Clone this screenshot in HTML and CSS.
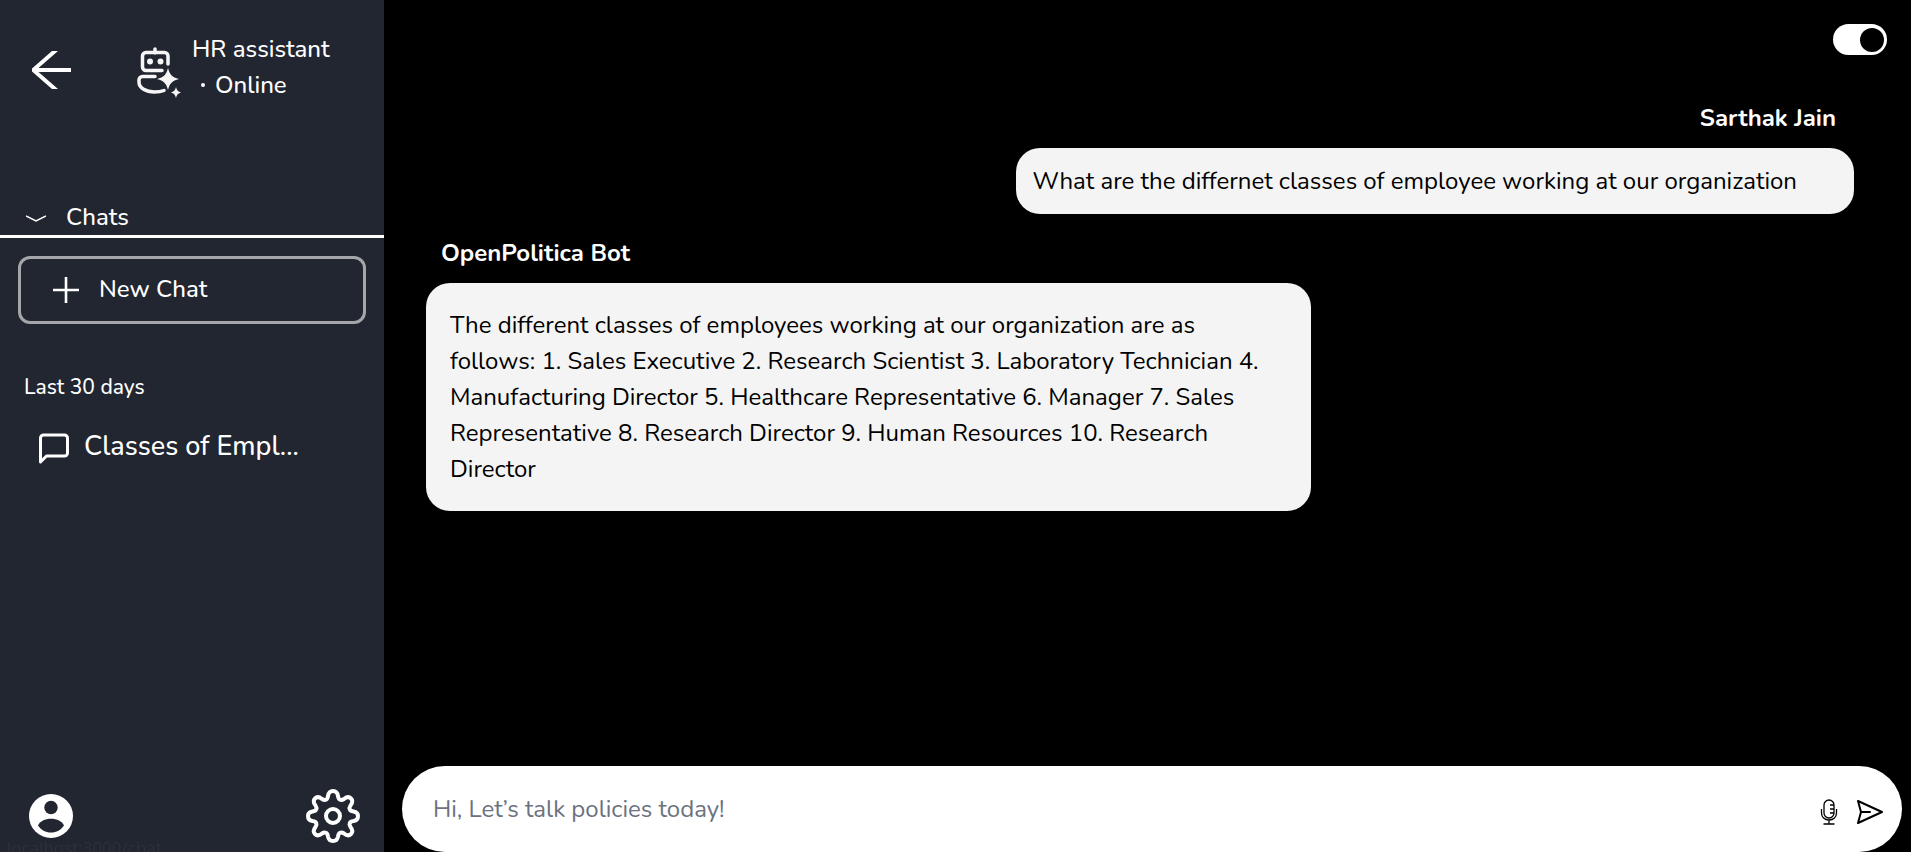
FILE: index.html
```html
<!DOCTYPE html>
<html lang="en">
<head>
<meta charset="utf-8">
<meta name="viewport" content="width=device-width, initial-scale=1">
<title>HR assistant</title>
<link rel="stylesheet" href="styles.css">
</head>
<body class="app">
  <aside class="sidebar">
    <header class="assistant">
      <button class="icon-button" type="button" aria-label="Back">
        <svg width="39" height="38" viewBox="0 0 39 38" fill="#fff"><path d="M20 0H26L6.500 17H39V21H6.500L26 38H20L0 20.500V17.500z"/></svg>
      </button>
      <svg class="robot" width="44" height="52" viewBox="0 0 44 52" fill="none" stroke="#f6f6f6" stroke-width="3.500" stroke-linecap="round">
        <path d="M18 2V6M31 17V9a3.500 3.500 0 0 0-3.500-3.500H9A3.500 3.500 0 0 0 5.500 9v11A3.500 3.500 0 0 0 9 23.500h16"/>
        <path d="M18 29.500H5.500A3.500 3.500 0 0 0 2 33v2c0 6 7 10 15.500 10 4 0 7-.500 9.500-1.500"/>
        <g fill="#f6f6f6" stroke="none"><circle cx="13" cy="14.500" r="3"/><circle cx="23.500" cy="14.500" r="3"/>
        <path d="M31 21c2 7 4 9 11 11-7 2-9 4-11 11-2-7-4-9-11-11 7-2 9-4 11-11z"/><path d="M39 40c1 3.500 2 4.500 5 5.500-3 1-4 2-5 5.500-1-3.500-2-4.500-5-5.500 3-1 4-2 5-5.500z"/></g>
      </svg>
      <div class="identity"><span>HR assistant</span><span class="status">Online</span></div>
    </header>
    <h2 class="section">
      <svg width="20" height="10" viewBox="0 0 20 10" fill="none" stroke="#fff" stroke-width="1.500"><path d="M0 4L10 9L20 4"/></svg>
      Chats
    </h2>
    <button class="new-chat" type="button">
      <svg width="26" height="28" viewBox="0 0 26 28" stroke="#fff" stroke-width="2.600"><path d="M13 2V28M0 15H26"/></svg>
      New Chat
    </button>
    <h3 class="period">Last 30 days</h3>
    <a class="chat-link" href="#">
      <svg width="36" height="36" viewBox="0 0 24 24" fill="none" stroke="#fff" stroke-width="2" stroke-linecap="round" stroke-linejoin="round"><path d="M21 16a2 2 0 0 1-2 2H7l-4 4V6a2 2 0 0 1 2-2h14a2 2 0 0 1 2 2z"/></svg>
      <span>Classes of Empl...</span>
    </a>
    <footer class="sidebar-footer">
      <button class="icon-button" type="button" aria-label="Profile">
        <svg width="44" height="44" viewBox="0 0 44 44"><circle cx="22" cy="22" r="22" fill="#fff"/><g fill="#222630"><circle cx="22" cy="13.500" r="6.700"/><path d="M9 31.500C11 27 16 24.700 22 24.700S33 27 35 31.500C32 36 27.500 38.500 22 38.500S12 36 9 31.500z"/></g></svg>
      </button>
      <button class="icon-button" type="button" aria-label="Settings">
        <svg width="54" height="54" viewBox="0 0 54 54" fill="none" stroke="#fff" stroke-width="4" stroke-linejoin="round"><circle cx="27" cy="27" r="7"/><path d="M27 2c3 0 4.500 2 5 5 .500 4 3 5 6 3 2.500-2 5-2.500 7-.500s1.500 4.500-.500 7c-2 3-1 5.500 3 6 3 .500 4.500 2 4.500 4.500s-1.500 4.500-4.500 5c-4 .500-5 3-3 6 2 2.500 2.500 5 .500 7s-4.500 1.500-7-.500c-3-2-5.500-1-6 3-.500 3-2 4.500-5 4.500s-4.500-1.500-5-4.500c-.500-4-3-5-6-3-2.500 2-5 2.500-7 .500s-1.500-4.500.500-7c2-3 1-5.500-3-6-3-.500-4.500-2-4.500-5s1.500-4 4.500-4.500c4-.500 5-3 3-6-2-2.500-2.500-5-.500-7s4.500-1.500 7 .500c3 2 5.500 1 6-3 .500-3 2-5 5-5z"/></svg>
      </button>
    </footer>
  </aside>
  <main class="chat">
    <label class="toggle"><input class="toggle-input" type="checkbox" role="switch" aria-label="Dark mode" checked></label>
    <section class="messages">
      <article class="message message-user">
        <h4 class="author">Sarthak Jain</h4>
        <p class="bubble">What are the differnet classes of employee working at our organization</p>
      </article>
      <article class="message message-bot">
        <h4 class="author">OpenPolitica Bot</h4>
        <p class="bubble">The different classes of employees working at our organization are as follows: 1. Sales Executive 2. Research Scientist 3. Laboratory Technician 4. Manufacturing Director 5. Healthcare Representative 6. Manager 7. Sales Representative 8. Research Director 9. Human Resources 10. Research Director</p>
      </article>
    </section>
    <form class="composer">
      <input class="prompt" type="text" aria-label="Message" placeholder="Hi, Let’s talk policies today!">
      <div class="composer-actions">
        <button class="icon-button" type="button" aria-label="Speak">
          <svg width="18" height="26" viewBox="0 0 18 26" fill="none" stroke="#000" stroke-width="1.300"><rect x="4" y="1" width="10" height="18" rx="5"/><path d="M14 6h-4M14 10h-4M14 14h-4M1.500 10v4c0 4 3 7 7.500 7s7.500-3 7.500-7v-4M9 21v4M3.500 25h11"/></svg>
        </button>
        <button class="icon-button" type="button" aria-label="Send">
          <svg width="28" height="26" viewBox="0 0 28 26" fill="none" stroke="#000" stroke-width="2" stroke-linejoin="round" stroke-linecap="round"><path d="M2 2L26 13L2 24L5 13zM5 13H14"/></svg>
        </button>
      </div>
    </form>
  </main>
  <div class="link-status">localhost:3000/chat</div>
</body>
</html>
```
FILE: styles.css
```css
* { box-sizing: border-box; }
.app {
  margin: 0;
  display: flex;
  min-height: 100vh;
  background: #000;
  color: #fff;
  font: 24px/36px Nunito, Lato, "Open Sans", sans-serif;
}
.app svg { display: block; flex: none; }
h2, h3, h4, p { margin: 0; font-size: inherit; font-weight: inherit; }
button, input { font: inherit; color: inherit; }
.icon-button { border: 0; padding: 0; background: none; cursor: pointer; }

.sidebar {
  flex: none;
  width: 384px;
  display: flex;
  flex-direction: column;
  background: #222630;
  font-weight: 500;
}
.assistant { display: flex; align-items: flex-end; padding: 31px 32px 0; }
.assistant .icon-button { padding-bottom: 14px; }
.robot { margin: 0 11px 4px 66px; }
.identity { display: flex; flex-direction: column; }
.status { display: flex; align-items: center; gap: 10px; padding-left: 9px; }
.status::before { content: ""; width: 4px; height: 4px; border-radius: 50%; background: #fff; }
.section {
  display: flex;
  align-items: center;
  gap: 20px;
  margin-top: 96px;
  padding-left: 26px;
  border-bottom: 3px solid #fff;
}
.new-chat {
  display: flex;
  align-items: center;
  gap: 20px;
  margin: 18px;
  padding: 12px 32px 14px;
  border: 3px solid #a5a6aa;
  border-radius: 12px;
  background: none;
}
.period { margin: 27px 24px 0; font-size: 21px; }
.chat-link {
  display: flex;
  align-items: center;
  gap: 12px;
  margin-top: 24px;
  padding-left: 36px;
  color: #fff;
  font-size: 27px;
  text-decoration: none;
}
.sidebar-footer {
  display: flex;
  align-items: center;
  justify-content: space-between;
  margin-top: auto;
  padding: 0 24px 9px 29px;
}

.chat { flex: 1; min-width: 0; display: flex; flex-direction: column; }
.toggle { align-self: flex-end; margin: 24px 24px 0; display: flex; }
.toggle-input {
  appearance: none;
  display: flex;
  align-items: center;
  justify-content: flex-end;
  width: 54px;
  height: 31px;
  margin: 0;
  padding: 0 3px;
  border-radius: 16px;
  background: #fff;
}
.toggle-input::before { content: ""; width: 24px; height: 24px; border-radius: 50%; background: #000; }
.toggle-input:not(:checked) { justify-content: flex-start; }
.messages { flex: 1; display: flex; flex-direction: column; gap: 21px; padding: 45px 57px 24px 42px; }
.message { display: flex; flex-direction: column; align-items: flex-start; gap: 12px; }
.author { padding: 0 18px 0 15px; font-weight: 700; }
.bubble { border-radius: 24px; background: #f4f4f4; color: #000; }
.message-user { align-items: flex-end; }
.message-user .bubble { padding: 15px 57px 15px 16px; }
.message-bot .bubble { width: 62%; padding: 24px 40px 24px 24px; }
.composer {
  display: flex;
  align-items: center;
  margin: 0 9px 0 18px;
  padding: 25px 18px 25px 31px;
  gap: 20px;
  border-radius: 43px;
  background: #fff;
}
.composer-actions { display: flex; gap: 18px; padding-top: 6px; }
.prompt { flex: 1; min-width: 0; height: 36px; padding: 0; border: 0; outline: 0; background: none; color: #000; }
.prompt::placeholder { color: #6b7280; opacity: 1; }

.link-status {
  position: fixed;
  left: 0;
  bottom: 0;
  height: 21px;
  padding: 0 12px 0 7px;
  overflow: hidden;
  color: #2c303b;
  font: 17px/34px "Open Sans", sans-serif;
  pointer-events: none;
}
```
